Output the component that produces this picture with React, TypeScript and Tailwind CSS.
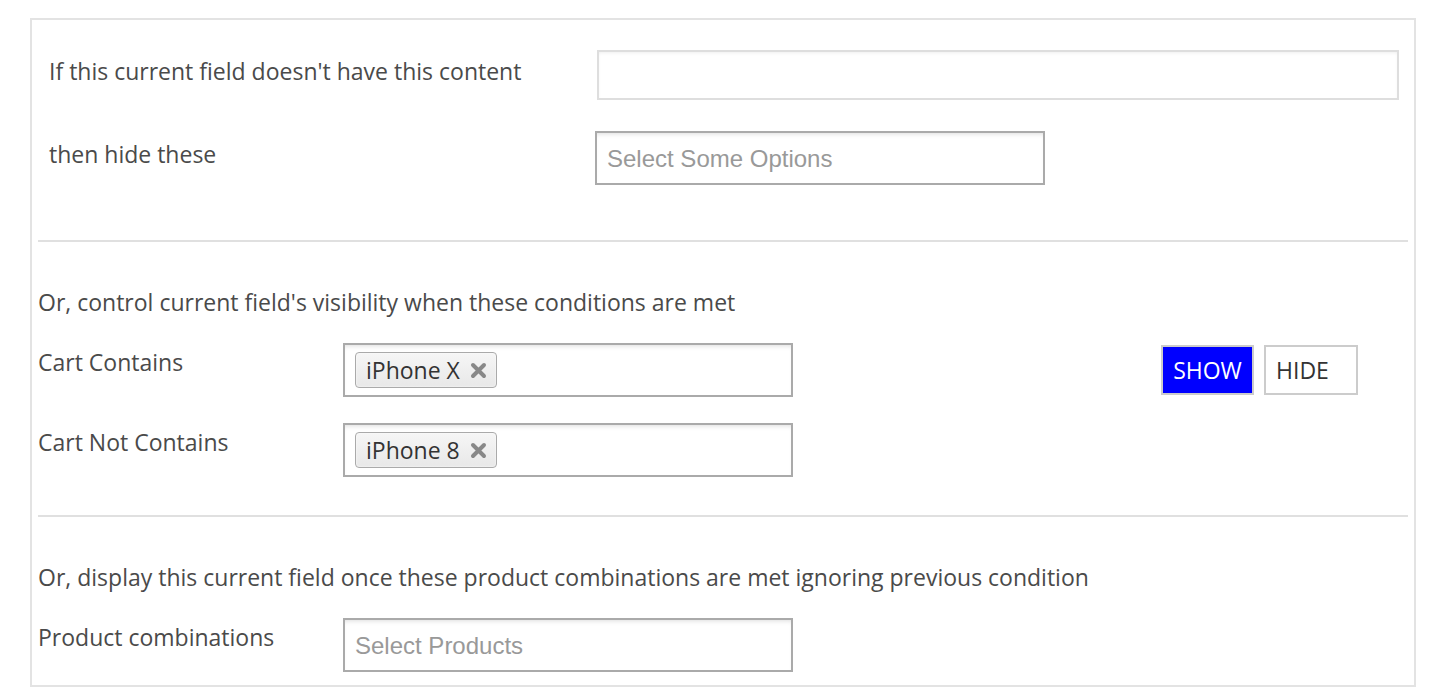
import React from "react";

const FONT = "font-['Segoe_UI','Open_Sans','Noto_Sans',sans-serif]";

function XMark() {
  return (
    <svg width="17" height="17" viewBox="0 0 17 17" className="shrink-0">
      <path d="M3 3 L14 14 M14 3 L3 14" stroke="#888" strokeWidth="4" strokeLinecap="round" />
    </svg>
  );
}

function Tag({ label }: { label: string }) {
  return (
    <span className="flex items-center gap-[10px] h-[36px] pl-[10px] pr-[9px] rounded-[4px] border border-[#aaa] bg-gradient-to-b from-[#f6f6f6] to-[#e8e8e8] text-[23px] text-[#333] shadow-[0_0_2px_white_inset]">
      {label}
      <XMark />
    </span>
  );
}

function MultiBox({ children, placeholder }: { children?: React.ReactNode; placeholder?: string }) {
  return (
    <div className="w-[450px] h-[54px] border-2 border-[#aaa] bg-white flex items-center px-[10px] shadow-[inset_0_4px_5px_-3px_#ddd]">
      {children}
      {placeholder && (
        <span className="font-['Liberation_Sans',Arial,sans-serif] text-[24px] text-[#999] pt-[2px]">{placeholder}</span>
      )}
    </div>
  );
}

export default function App() {
  return (
    <div className={`w-[1434px] h-[687px] bg-white overflow-hidden ${FONT}`}>
      <div className="ml-[30px] mt-[18px] w-[1386px] h-[669px] border-2 border-[#e3e3e3] px-[6px]">
        {/* Section 1 */}
        <div className="pl-[11px] pt-[30px]">
          <div className="flex items-start">
            <span className="w-[548px] text-[23px] text-[#4a4a4a] leading-[30px] pt-[6px]">
              If this current field doesn't have this content
            </span>
            <div className="w-[802px] h-[50px] border-2 border-[#dedede] bg-white shadow-[inset_0_2px_4px_-2px_#e6e6e6]" />
          </div>
          <div className="flex items-start mt-[31px]">
            <span className="w-[546px] text-[23px] text-[#4a4a4a] leading-[30px] pt-[8px]">then hide these</span>
            <div className="w-[450px] h-[54px] border-2 border-[#aaa] bg-white flex items-center px-[10px] shadow-[inset_0_4px_5px_-3px_#ddd]">
              <span className="font-['Liberation_Sans',Arial,sans-serif] text-[24px] text-[#999] pt-[2px]">Select Some Options</span>
            </div>
          </div>
        </div>

        <div className="mt-[55px] h-[2px] bg-[#e0e0e0]" />

        {/* Section 2 */}
        <div className="pt-[45px]">
          <p className="text-[23px] text-[#4a4a4a] leading-[30px]">
            Or, control current field's visibility when these conditions are met
          </p>
          <div className="flex items-start mt-[26px]">
            <span className="w-[305px] text-[23px] text-[#4a4a4a] leading-[30px] pt-[4px]">Cart Contains</span>
            <MultiBox>
              <Tag label="iPhone X" />
            </MultiBox>
            <div className="ml-[368px] mt-[2px] flex gap-[10px]">
              <button className="w-[93px] h-[50px] border-2 border-[#ccc] bg-[#0000ff] text-white text-[23px] leading-none">
                SHOW
              </button>
              <button className="w-[94px] h-[50px] border-2 border-[#ccc] bg-white text-[#333] text-[23px] leading-none text-left pl-[10px]">
                HIDE
              </button>
            </div>
          </div>
          <div className="flex items-start mt-[26px]">
            <span className="w-[305px] text-[23px] text-[#4a4a4a] leading-[30px] pt-[4px]">Cart Not Contains</span>
            <MultiBox>
              <Tag label="iPhone 8" />
            </MultiBox>
          </div>
        </div>

        <div className="mt-[38px] h-[2px] bg-[#e0e0e0]" />

        {/* Section 3 */}
        <div className="pt-[45px]">
          <p className="text-[23px] text-[#4a4a4a] leading-[30px]">
            Or, display this current field once these product combinations are met ignoring previous condition
          </p>
          <div className="flex items-start mt-[26px]">
            <span className="w-[305px] text-[23px] text-[#4a4a4a] leading-[30px] pt-[4px]">Product combinations</span>
            <MultiBox placeholder="Select Products" />
          </div>
        </div>
      </div>
    </div>
  );
}
